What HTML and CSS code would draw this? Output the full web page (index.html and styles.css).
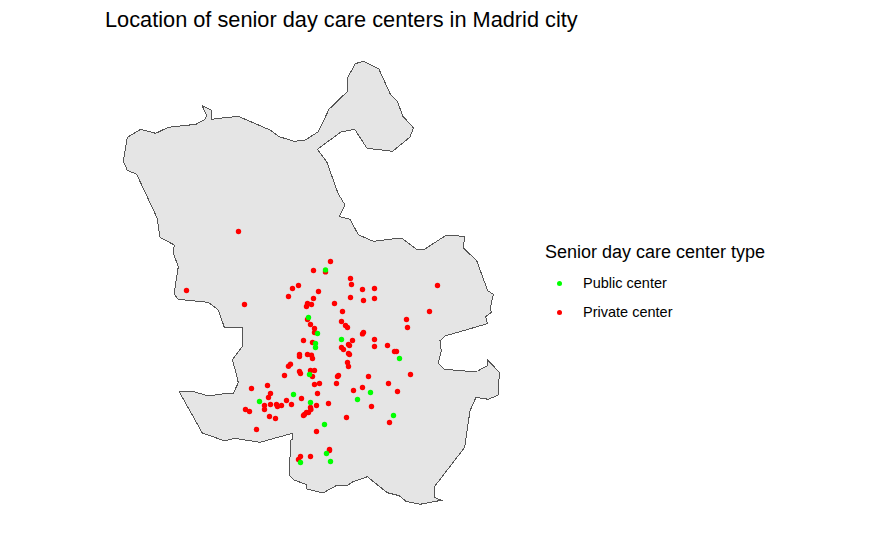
FILE: index.html
```html
<!DOCTYPE html>
<html lang="en">
<head>
<meta charset="utf-8">
<title>Location of senior day care centers in Madrid city</title>
<link rel="stylesheet" href="styles.css">
</head>
<body>
<main class="plot">
  <h1 class="plot-title">Location of senior day care centers in Madrid city</h1>
  <div class="plot-body">
    <svg class="map" viewBox="120 50 400 460" width="400" height="460" role="img" aria-label="Map of Madrid city with senior day care centers">
      <path class="region" d="M202.3 105.7 211.3 110 211.3 119.3 225 117.7 238.3 116.3 270 130 279.3 136.7 294 141.3 305.3 140 318.3 131.7 329 109.3 337.7 100.7 347.3 91.7 347.3 78.3 355.3 63.7 363.3 61.3 378.7 68.7 390.7 95 397.3 101 402.7 116 410 124 413.5 128 410 137 392.7 151.3 367 148.3 354.7 129.3 341 132 317.3 149.3 326.7 161.7 338 193.3 345 205 339.3 216.7 350 219.3 358.3 234.7 373.3 241.3 398.3 238.3 402 238.3 417.3 250 425 249 446 235.3 464.3 236.3 463.7 248.3 476.7 260.7 487.7 290.7 493.3 294.3 490.3 308.3 491.3 312.3 485.7 316.7 487.3 323.7 445 336 440 340.7 441.3 351 438.3 363 444.3 369.3 469 371.3 477.7 371 487.3 365.7 487.7 360 499.3 372.3 498.3 395 488.3 399.3 476 397.3 470 410.7 464.7 447.3 434.7 486.3 434.3 497.3 441.3 500.3 420 504.3 406 501.3 399.3 495.7 387.3 492.7 367.3 476.7 351.7 482.3 346.7 486 336.7 485.3 323 493 306.7 489 306 484.3 294 480 289.3 475 290.7 440 292.3 439.3 292.3 433.3 260 442.3 234.3 438.3 225 441 202.3 433 179 391.3 194 391.7 208.3 396 221.7 394 233.3 393.3 238.3 382.7 235.3 370 232.3 360 242 346.7 242 327.3 224.3 327.3 218.3 310 208.3 302.3 178.3 299.3 174 294 178.3 266.7 173.3 253.3 174.3 245 160 237.3 157 217.7 136.7 174.3 127.3 170.3 123.3 161 127.3 137.3 140.7 129.3 155.7 133.3 168.3 127.3 196 124.3 205 119.3 206.7 115 204.3 110.7Z"/>
      <g class="private">
        <circle cx="330.3" cy="261.3"/><circle cx="313.3" cy="270.3"/><circle cx="325.3" cy="271.7"/><circle cx="350.3" cy="278.3"/><circle cx="351.3" cy="284.3"/><circle cx="362.3" cy="289.3"/><circle cx="374.3" cy="288.3"/><circle cx="298.3" cy="285.3"/><circle cx="292.3" cy="288.3"/><circle cx="288.3" cy="296.3"/><circle cx="318.3" cy="291.3"/><circle cx="313.3" cy="298.3"/><circle cx="350.3" cy="297.3"/><circle cx="363.3" cy="300.3"/><circle cx="374.3" cy="298.3"/><circle cx="307.3" cy="303.3"/><circle cx="311.3" cy="304.3"/><circle cx="306.3" cy="306.3"/><circle cx="334.3" cy="303.3"/><circle cx="342.3" cy="311.3"/><circle cx="307.3" cy="319.3"/><circle cx="310.3" cy="324.3"/><circle cx="341.3" cy="321.3"/><circle cx="345.3" cy="325.3"/><circle cx="347.3" cy="327.3"/><circle cx="314.3" cy="328.3"/><circle cx="314.3" cy="332.3"/><circle cx="363.3" cy="332.3"/><circle cx="362.3" cy="333.7"/><circle cx="303.3" cy="340.3"/><circle cx="312.3" cy="342.3"/><circle cx="352.3" cy="340.3"/><circle cx="374.3" cy="339.3"/><circle cx="348.3" cy="344.3"/><circle cx="349.3" cy="345.3"/><circle cx="374.3" cy="346.3"/><circle cx="387.3" cy="345.3"/><circle cx="341.3" cy="347.3"/><circle cx="343.3" cy="349.3"/><circle cx="299.3" cy="354.3"/><circle cx="299.3" cy="356.3"/><circle cx="307.3" cy="354.3"/><circle cx="311.3" cy="355"/><circle cx="312.3" cy="358.3"/><circle cx="348.3" cy="353.3"/><circle cx="349.3" cy="354.3"/><circle cx="347.3" cy="362.3"/><circle cx="348.3" cy="366.3"/><circle cx="290.3" cy="364"/><circle cx="288.3" cy="366"/><circle cx="284.3" cy="375.3"/><circle cx="299.3" cy="371.3"/><circle cx="300.3" cy="373.3"/><circle cx="310.3" cy="370.3"/><circle cx="314.3" cy="370.3"/><circle cx="312.3" cy="376.3"/><circle cx="338.3" cy="375.3"/><circle cx="337.3" cy="376.3"/><circle cx="314.3" cy="384.3"/><circle cx="319.3" cy="383.3"/><circle cx="336.3" cy="383.3"/><circle cx="353.3" cy="390.3"/><circle cx="267.3" cy="385.3"/><circle cx="251.3" cy="388.3"/><circle cx="270.3" cy="393.3"/><circle cx="268.3" cy="397.3"/><circle cx="317.3" cy="393.3"/><circle cx="301.3" cy="398.3"/><circle cx="286.3" cy="400.3"/><circle cx="264.3" cy="405.3"/><circle cx="264.3" cy="409.3"/><circle cx="270.3" cy="404.3"/><circle cx="276.3" cy="404.3"/><circle cx="277.3" cy="406.3"/><circle cx="281.3" cy="405.3"/><circle cx="291.3" cy="404.3"/><circle cx="328.3" cy="403.3"/><circle cx="316.3" cy="405.3"/><circle cx="310.3" cy="407.3"/><circle cx="310.7" cy="409.3"/><circle cx="308.3" cy="412.3"/><circle cx="306.3" cy="412.3"/><circle cx="304.3" cy="414.3"/><circle cx="303.3" cy="415.3"/><circle cx="245.3" cy="409.3"/><circle cx="249.3" cy="411.3"/><circle cx="269.3" cy="416.3"/><circle cx="275.3" cy="418.3"/><circle cx="346.3" cy="417.3"/><circle cx="256.3" cy="429.3"/><circle cx="316.3" cy="431.3"/><circle cx="329.3" cy="449.3"/><circle cx="329.3" cy="450.3"/><circle cx="300.3" cy="456.3"/><circle cx="298.3" cy="459.3"/><circle cx="310.3" cy="456.3"/><circle cx="238.3" cy="231.3"/><circle cx="186.3" cy="290.3"/><circle cx="244.3" cy="304.3"/><circle cx="437.3" cy="285.3"/><circle cx="429.3" cy="311.3"/><circle cx="406.3" cy="319.3"/><circle cx="407.3" cy="327.3"/><circle cx="394.3" cy="351.3"/><circle cx="396.3" cy="351.3"/><circle cx="410.3" cy="374.3"/><circle cx="368.3" cy="376.3"/><circle cx="388.3" cy="383.3"/><circle cx="362.3" cy="387.3"/><circle cx="397.3" cy="391.3"/><circle cx="371.3" cy="406.3"/><circle cx="389.3" cy="422.3"/>
      </g>
      <g class="public">
        <circle cx="325.3" cy="269.7"/><circle cx="308.3" cy="317.3"/><circle cx="317.3" cy="333.3"/><circle cx="341.3" cy="339.3"/><circle cx="315.3" cy="343.3"/><circle cx="315.3" cy="347.3"/><circle cx="309.3" cy="374.3"/><circle cx="293.3" cy="394.3"/><circle cx="259.3" cy="401.3"/><circle cx="310.3" cy="402.3"/><circle cx="324.3" cy="424.3"/><circle cx="326.3" cy="453.3"/><circle cx="300.3" cy="462.3"/><circle cx="330.3" cy="461.3"/><circle cx="399.3" cy="358.3"/><circle cx="370.3" cy="392.3"/><circle cx="357.3" cy="399.3"/><circle cx="393.3" cy="415.3"/>
      </g>
    </svg>
    <aside class="legend">
      <h2 class="legend-title">Senior day care center type</h2>
      <ul class="legend-list">
        <li class="legend-item"><span class="key key-public"></span>Public center</li>
        <li class="legend-item"><span class="key key-private"></span>Private center</li>
      </ul>
    </aside>
  </div>
</main>
</body>
</html>
```
FILE: styles.css
```css
* { box-sizing: border-box; }
html, body { margin: 0; padding: 0; background: #fff; }
body { font-family: "Liberation Sans", Arial, sans-serif; color: #000; }
.plot { width: 875px; height: 540px; overflow: hidden; }
.plot-title {
  margin: 0;
  padding: 8px 0 0 105px;
  height: 50px;
  font-size: 21.75px;
  line-height: 24px;
  font-weight: 400;
}
.plot-body {
  display: flex;
  align-items: center;
  padding-left: 120px;
  height: 460px;
}
.map { display: block; flex: none; }
.region {
  fill: #e5e5e5;
  stroke: #555;
  stroke-width: 1;
  stroke-linejoin: miter;
  shape-rendering: crispEdges;
}
.map circle { r: 2.7px; transform: translate(0.2px, 0.2px); }
.private { fill: #ff0000; }
.public { fill: #00ff00; }
.legend { margin-left: 25px; padding-top: 8px; flex: none; }
.legend-title {
  margin: 0 0 7px;
  font-size: 18px;
  line-height: 20px;
  font-weight: 400;
}
.legend-list { list-style: none; margin: 0; padding: 0 0 0 12px; }
.legend-item {
  display: flex;
  align-items: center;
  height: 29px;
  font-size: 14.5px;
}
.key { width: 5px; height: 5px; border-radius: 50%; margin-right: 21px; flex: none; }
.key-public { background: #00ff00; }
.key-private { background: #ff0000; }
```
